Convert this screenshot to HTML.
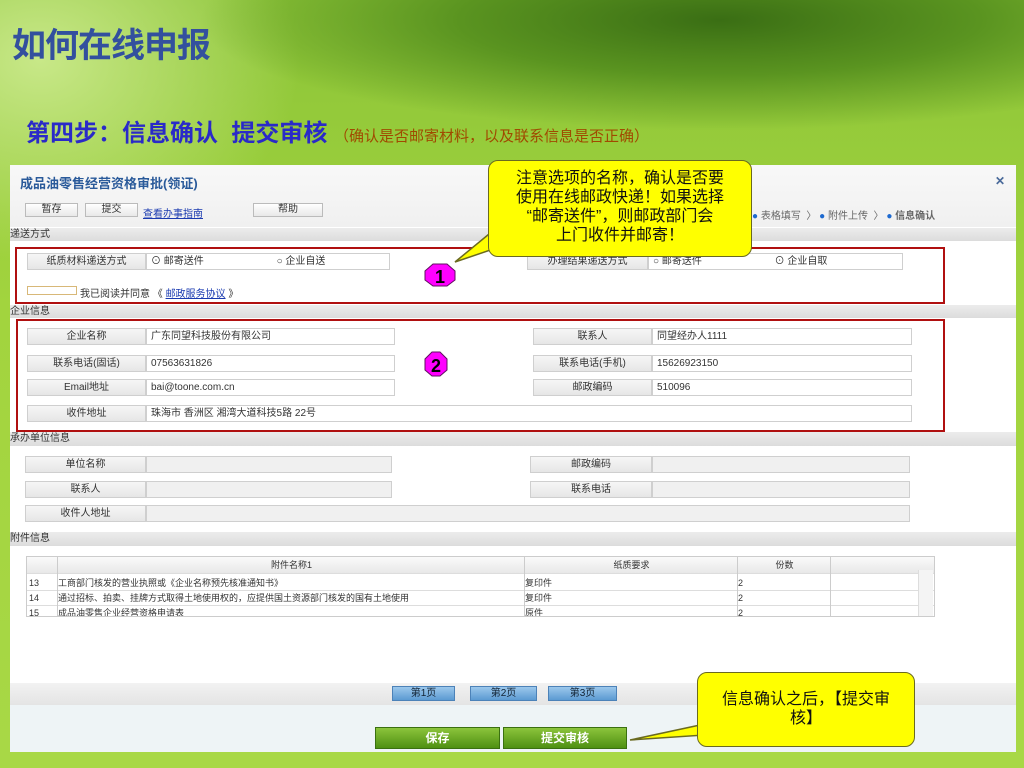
<!DOCTYPE html>
<html><head><meta charset="utf-8"><style>
*{margin:0;padding:0;box-sizing:border-box}
body{width:1024px;height:768px;overflow:hidden;position:relative;font-family:"Liberation Sans","Noto Sans CJK SC",sans-serif;
background:radial-gradient(ellipse 520px 110px at 720px 20px,#3a6e14 0%,#5a9420 50%,rgba(150,205,60,0) 100%),radial-gradient(ellipse 260px 200px at 40px 60px,#c8e888 0%,rgba(160,210,70,0) 100%),linear-gradient(180deg,#8cc438 0%,#a2d43e 40%,#a8d846 100%);}
.a{position:absolute}
.t{font-size:10px;color:#333;white-space:nowrap}
.bar{position:absolute;left:10px;width:1006px;height:13px;background:linear-gradient(#ececec,#dcdcdc);font-size:10px;color:#333;line-height:13px}
.lab{position:absolute;height:17px;background:linear-gradient(#f6f6f6,#e6e6e6);border:1px solid #cfcfcf;font-size:10px;color:#333;text-align:center;line-height:15px}
.val{position:absolute;height:17px;background:#fff;border:1px solid #cfcfcf;font-size:10px;color:#333;line-height:15px;padding-left:4px;white-space:nowrap}
.gv{background:#f0f0f0}
.btn{position:absolute;height:14px;border:1px solid #bbb;background:linear-gradient(#fff,#e8e8e8);font-size:10px;color:#333;text-align:center;line-height:12px}
.pg{position:absolute;top:686px;height:15px;background:linear-gradient(#9cc8ec,#5c9ad2);border:1px solid #4c82b8;font-size:10px;color:#123;text-align:center;line-height:13px}
.gb{position:absolute;top:727px;height:22px;background:linear-gradient(#8cc43c,#4e9012);border:1px solid #3a7010;color:#fff;font-weight:bold;font-size:12px;text-align:center;line-height:20px}
.call{position:absolute;background:#ffff00;border:1.5px solid #6a6a20;border-radius:10px;text-align:center;color:#111;font-size:16px;line-height:19px}
.row{position:absolute;left:0;width:909px;height:15px;border-bottom:1px solid #ddd;font-size:9px;line-height:15px;color:#333;white-space:nowrap}
.row span{position:absolute;top:0;overflow:hidden;height:15px}
</style></head><body>
<div class="a" style="left:12px;top:18px;font-size:34px;font-weight:bold;color:#33509e;letter-spacing:-1px">如何在线申报</div>
<div class="a" style="left:26px;top:113px;font-size:24px;font-weight:bold;color:#2a2ac8;white-space:nowrap">第四步：信息确认&nbsp;&nbsp;提交审核 <span style="font-size:15px;font-weight:normal;color:#a04a00">（确认是否邮寄材料，以及联系信息是否正确）</span></div>

<div class="a" style="left:10px;top:165px;width:1006px;height:587px;background:#fff"></div>
<div class="a" style="left:10px;top:165px;width:1006px;height:62px;background:linear-gradient(#f8f8f8,#f0f0f0)"></div>
<div class="a" style="left:20px;top:173px;font-size:13px;font-weight:bold;color:#2a5a9a">成品油零售经营资格审批(领证)</div>
<div class="a" style="left:995px;top:174px;font-size:12px;color:#4a6a9a;font-weight:bold">✕</div>
<div class="btn" style="left:25px;top:203px;width:53px">暂存</div>
<div class="btn" style="left:85px;top:203px;width:53px">提交</div>
<div class="a t" style="left:143px;top:205px;color:#1a3ab0;text-decoration:underline">查看办事指南</div>
<div class="btn" style="left:253px;top:203px;width:70px">帮助</div>
<div class="a t" style="left:752px;top:207px;color:#666"><span style="color:#1e6ad0">●</span> 表格填写 &nbsp;〉 <span style="color:#1e6ad0">●</span> 附件上传 &nbsp;〉 <span style="color:#1e6ad0">●</span> <b>信息确认</b></div>

<div class="bar" style="top:228px">递送方式</div>
<div class="a" style="left:15px;top:247px;width:930px;height:57px;border:2px solid #b01010"></div>
<div class="lab" style="left:27px;top:253px;width:119px">纸质材料递送方式</div>
<div class="val" style="left:146px;top:253px;width:244px">⊙ 邮寄送件 <span style="margin-left:70px">○ 企业自送</span></div>
<div class="lab" style="left:527px;top:253px;width:121px">办理结果递送方式</div>
<div class="val" style="left:648px;top:253px;width:255px">○ 邮寄送件 <span style="margin-left:70px">⊙ 企业自取</span></div>
<div class="a" style="left:27px;top:286px;width:50px;height:9px;border:1px solid #d8b878;background:#fff"></div>
<div class="a t" style="left:80px;top:285px">我已阅读并同意 《 <span style="color:#1a3ab0;text-decoration:underline">邮政服务协议</span> 》</div>

<div class="bar" style="top:305px">企业信息</div>
<div class="a" style="left:16px;top:319px;width:929px;height:113px;border:2px solid #b01010"></div>
<div class="lab" style="left:27px;top:328px;width:119px">企业名称</div><div class="val" style="left:146px;top:328px;width:249px">广东同望科技股份有限公司</div>
<div class="lab" style="left:533px;top:328px;width:119px">联系人</div><div class="val" style="left:652px;top:328px;width:260px">同望经办人1111</div>
<div class="lab" style="left:27px;top:355px;width:119px">联系电话(固话)</div><div class="val" style="left:146px;top:355px;width:249px">07563631826</div>
<div class="lab" style="left:533px;top:355px;width:119px">联系电话(手机)</div><div class="val" style="left:652px;top:355px;width:260px">15626923150</div>
<div class="lab" style="left:27px;top:379px;width:119px">Email地址</div><div class="val" style="left:146px;top:379px;width:249px">bai@toone.com.cn</div>
<div class="lab" style="left:533px;top:379px;width:119px">邮政编码</div><div class="val" style="left:652px;top:379px;width:260px">510096</div>
<div class="lab" style="left:27px;top:405px;width:119px">收件地址</div><div class="val" style="left:146px;top:405px;width:766px">珠海市 香洲区 湘湾大道科技5路 22号</div>

<div class="bar" style="top:432px;height:14px">承办单位信息</div>
<div class="lab" style="left:25px;top:456px;width:121px">单位名称</div><div class="val gv" style="left:146px;top:456px;width:246px"></div>
<div class="lab" style="left:530px;top:456px;width:122px">邮政编码</div><div class="val gv" style="left:652px;top:456px;width:258px"></div>
<div class="lab" style="left:25px;top:481px;width:121px">联系人</div><div class="val gv" style="left:146px;top:481px;width:246px"></div>
<div class="lab" style="left:530px;top:481px;width:122px">联系电话</div><div class="val gv" style="left:652px;top:481px;width:258px"></div>
<div class="lab" style="left:25px;top:505px;width:121px">收件人地址</div><div class="val gv" style="left:146px;top:505px;width:764px"></div>

<div class="bar" style="top:532px;height:14px">附件信息</div>
<div class="a" style="left:26px;top:556px;width:909px;height:61px;border:1px solid #ccc;overflow:hidden">
<div class="row" style="top:0;height:17px;line-height:16px;background:linear-gradient(#fafafa,#e8e8e8)"><span style="left:31px;width:467px;text-align:center">附件名称1</span><span style="left:498px;width:213px;text-align:center">纸质要求</span><span style="left:711px;width:93px;text-align:center">份数</span></div>
<div class="row" style="top:19px"><span style="left:2px">13</span><span style="left:31px;width:467px">工商部门核发的营业执照或《企业名称预先核准通知书》</span><span style="left:498px">复印件</span><span style="left:711px">2</span></div>
<div class="row" style="top:34px"><span style="left:2px">14</span><span style="left:31px;width:467px">通过招标、拍卖、挂牌方式取得土地使用权的，应提供国土资源部门核发的国有土地使用</span><span style="left:498px">复印件</span><span style="left:711px">2</span></div>
<div class="row" style="top:49px"><span style="left:2px">15</span><span style="left:31px;width:467px">成品油零售企业经营资格申请表</span><span style="left:498px">原件</span><span style="left:711px">2</span></div>
<div class="a" style="left:30px;top:0;width:1px;height:61px;background:#ccc"></div>
<div class="a" style="left:497px;top:0;width:1px;height:61px;background:#ccc"></div>
<div class="a" style="left:710px;top:0;width:1px;height:61px;background:#ccc"></div>
<div class="a" style="left:803px;top:0;width:1px;height:61px;background:#ccc"></div>
</div>
<div class="a" style="left:918px;top:570px;width:15px;height:46px;background:#f4f4f4;border-left:1px solid #ddd"></div>

<div class="a" style="left:10px;top:683px;width:1006px;height:22px;background:linear-gradient(#f2f2f2,#e4e4e4)"></div>
<div class="pg" style="left:392px;width:63px">第1页</div>
<div class="pg" style="left:470px;width:67px">第2页</div>
<div class="pg" style="left:548px;width:69px">第3页</div>
<div class="a" style="left:10px;top:705px;width:1006px;height:47px;background:#eef4f6"></div>
<div class="gb" style="left:375px;width:125px">保存</div>
<div class="gb" style="left:503px;width:124px">提交审核</div>

<svg class="a" style="left:0;top:0" width="1024" height="768">
<polygon points="500,225 455,262 520,240" fill="#ffff00" stroke="#6a6a20" stroke-width="1.5"/>
<polygon points="700,725 630,740 705,735" fill="#ffff00" stroke="#6a6a20" stroke-width="1.5"/>
<polygon points="433,264 447,264 455,271 455,280 447,286 433,286 425,280 425,271" fill="#ff00ff" stroke="#601060"/>
<text x="440" y="283" text-anchor="middle" font-size="18" font-weight="bold" font-family="Liberation Sans">1</text>
<polygon points="432,352 440,352 447,359 447,370 440,376 432,376 425,370 425,359" fill="#ff00ff" stroke="#601060"/>
<text x="436" y="372" text-anchor="middle" font-size="18" font-weight="bold" font-family="Liberation Sans">2</text>
</svg>
<div class="call" style="left:488px;top:160px;width:264px;height:97px;padding-top:8px">注意选项的名称，确认是否要<br>使用在线邮政快递！如果选择<br>“邮寄送件”，则邮政部门会<br>上门收件并邮寄！</div>
<div class="call" style="left:697px;top:672px;width:218px;height:75px;padding-top:17px">信息确认之后，【提交审<br>核】</div>
</body></html>
